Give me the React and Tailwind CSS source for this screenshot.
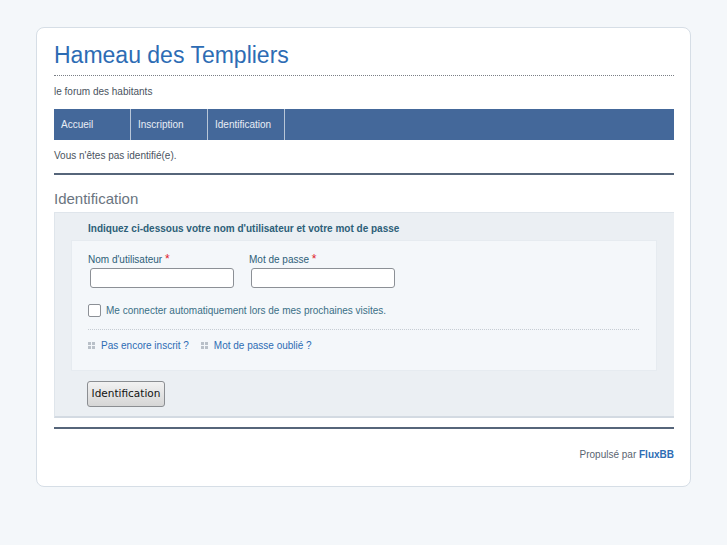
export default function App() {
  const sans = { fontFamily: '"Liberation Sans", Arial, sans-serif' };
  return (
    <div className="min-h-[545px] bg-[#f4f7fa] pt-[27px] pb-[59px]" style={sans}>
      <div className="mx-[36px] w-[655px] rounded-[8px] border border-[#d6dee6] bg-white pl-[17px] pr-[16px] pt-[13px] pb-[25px]">
        <div className="border-b border-dotted border-[#7a7f86] pb-[5px]">
          <h1 className="text-[23px] leading-[29px] text-[#2d6cb4]">Hameau des Templiers</h1>
        </div>
        <p className="mt-[9px] text-[10px] leading-[13px] text-[#4a5360]">le forum des habitants</p>
        <nav className="mt-[11px] flex h-[31px] bg-[#44689a]">
          {["Accueil", "Inscription", "Identification"].map((t) => (
            <div key={t} className="flex w-[77px] items-center border-r border-[#b8c6d8] pl-[7px] text-[10px] text-[#e8eef6]">
              {t}
            </div>
          ))}
        </nav>
        <p className="mt-[9px] text-[10px] leading-[13px] text-[#4a5360]">Vous n'êtes pas identifié(e).</p>
        <div className="mt-[11px] h-[2px] bg-[#56657a]" />
        <h2 className="mt-[15px] text-[15px] leading-[18px] text-[#6a7480]">Identification</h2>
        <div className="mt-[4px] border-l border-t border-[#dfe5eb] border-b-2 border-b-[#d3dae2] bg-[#ebeff3] pl-[16px] pr-[17px] pt-[9px] pb-[9px]">
          <p className="pl-[17px] text-[10px] font-bold leading-[13px] text-[#2d6078]">
            Indiquez ci-dessous votre nom d'utilisateur et votre mot de passe
          </p>
          <div className="mt-[5px] border border-[#e6ebf0] bg-[#f4f7fa] pl-[16px] pr-[17px] pt-[12px] pb-[18px]">
            <div className="flex gap-[15px]">
              <label className="block w-[146px]">
                <span className="block text-[10px] leading-[13px] text-[#2d6078]">
                  Nom d'utilisateur <span className="text-[12px] leading-none text-[#e0202a]">*</span>
                </span>
                <input className="mt-[2px] ml-[2px] block h-[20px] w-[144px] rounded-[3px] border border-[#8c9096] bg-white" />
              </label>
              <label className="block w-[146px]">
                <span className="block text-[10px] leading-[13px] text-[#2d6078]">
                  Mot de passe <span className="text-[12px] leading-none text-[#e0202a]">*</span>
                </span>
                <input className="mt-[2px] ml-[2px] block h-[20px] w-[144px] rounded-[3px] border border-[#8c9096] bg-white" />
              </label>
            </div>
            <div className="mt-[16px] flex items-center">
              <span className="block h-[13px] w-[13px] rounded-[2px] border border-[#8c9096] bg-white" />
              <span className="ml-[5px] text-[10px] leading-[13px] text-[#3a6f86]">Me connecter automatiquement lors de mes prochaines visites.</span>
            </div>
            <div className="mt-[12px] border-t border-dotted border-[#c6ccd3]" />
            <div className="mt-[9px] flex items-center text-[10px] leading-[13px] text-[#2d6cb4]">
              <Dots />
              <span className="ml-[6px]">Pas encore inscrit ?</span>
              <span className="ml-[12px]"><Dots /></span>
              <span className="ml-[6px]">Mot de passe oublié ?</span>
            </div>
          </div>
          <button
            className="mt-[10px] ml-[16px] h-[26px] w-[78px] rounded-[3px] border border-[#8b8e92] bg-gradient-to-b from-[#f2f2f2] to-[#d6d6d6] text-[10.5px] text-[#111]"
            style={{ fontFamily: '"DejaVu Sans", sans-serif' }}
          >
            Identification
          </button>
        </div>
        <div className="mt-[9px] h-[2px] bg-[#56657a]" />
        <p className="mt-[19px] text-right text-[10px] leading-[13px] text-[#5a6470]">
          Propulsé par <span className="font-bold text-[#2d6cb4]">FluxBB</span>
        </p>
      </div>
    </div>
  );
}

function Dots() {
  return (
    <svg width="7" height="7" viewBox="0 0 7 7" className="block">
      <rect x="0" y="0" width="3" height="3" fill="#b9c0c8" />
      <rect x="4" y="0" width="3" height="3" fill="#b9c0c8" />
      <rect x="0" y="4" width="3" height="3" fill="#b9c0c8" />
      <rect x="4" y="4" width="3" height="3" fill="#b9c0c8" />
    </svg>
  );
}
